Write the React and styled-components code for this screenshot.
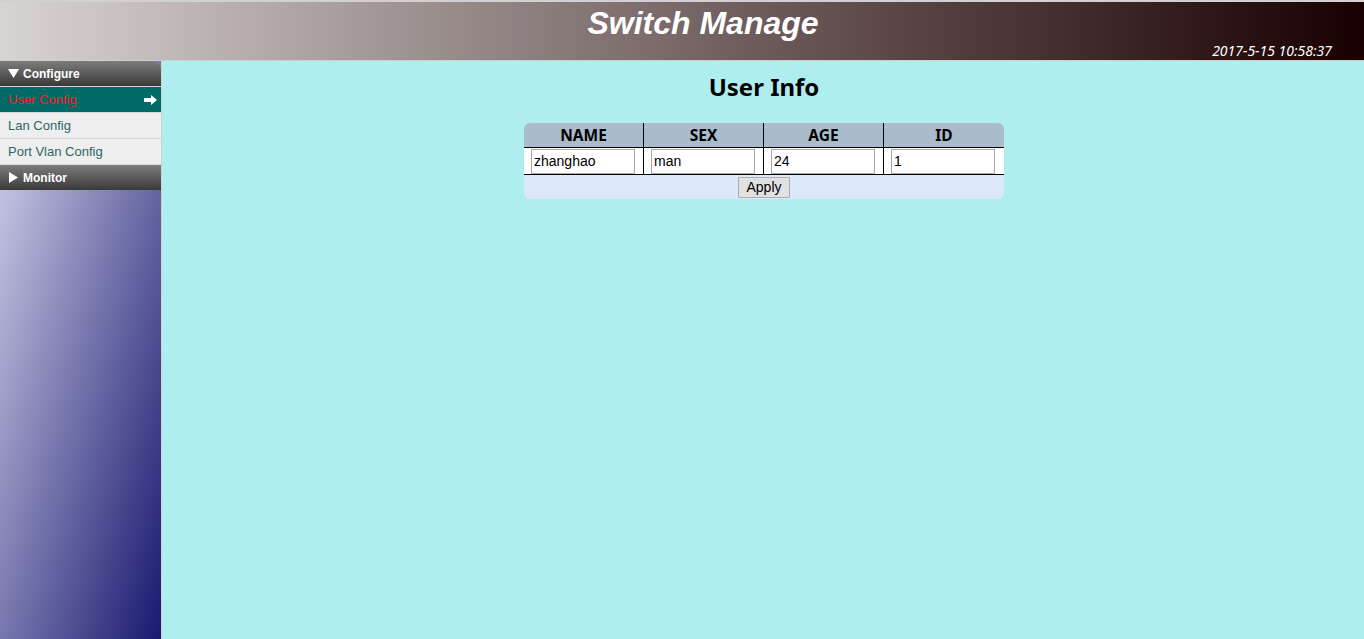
import { createGlobalStyle, styled } from 'styled-components'

const GlobalStyle = createGlobalStyle`
  html, body {
    margin: 0;
    padding: 0;
    height: 100%;
  }
  body {
    font-family: "Liberation Sans", Arial, sans-serif;
  }
  #root {
    height: 100%;
  }
`

const columns = [
  { name: 'NAME', value: 'zhanghao' },
  { name: 'SEX', value: 'man' },
  { name: 'AGE', value: '24' },
  { name: 'ID', value: '1' },
]

const menu = [
  { label: 'User Config', active: true },
  { label: 'Lan Config' },
  { label: 'Port Vlan Config' },
]

const Arrow = () => (
  <svg width='13' height='10' viewBox='0 0 13 10'>
    <path d='M0 3h7V0l6 5-6 5V7H0z' fill='#fff' />
  </svg>
)

// open / closed marker of a menu group
const Caret = ({ open }) => (
  <svg width='11' height='11' viewBox='0 0 11 11'>
    {open ? <path d='M0 1h11L5.5 10z' fill='#fff' /> : <path d='M1 0v11l9-5.5z' fill='#fff' />}
  </svg>
)

const App = () => {
  return (
    <Page>
      <GlobalStyle />
      <Header>
        <Title>Switch Manage</Title>
        <Clock>2017-5-15 10:58:37</Clock>
      </Header>
      <Body>
        <Sidebar>
          <GroupHead $rounded>
            <Caret open /> Configure
          </GroupHead>
          {menu.map((m) => (
            <Item key={m.label} $active={m.active}>
              {m.label}
              {m.active && <Arrow />}
            </Item>
          ))}
          <GroupHead>
            <Caret /> Monitor
          </GroupHead>
        </Sidebar>
        <Main>
          <Heading>User Info</Heading>
          <Table>
            <thead>
              <tr>
                {columns.map((c) => (
                  <Th key={c.name}>{c.name}</Th>
                ))}
              </tr>
            </thead>
            <tbody>
              <tr>
                {columns.map((c) => (
                  <Td key={c.name}>
                    <Field defaultValue={c.value} />
                  </Td>
                ))}
              </tr>
              <tr>
                <Foot colSpan={4}>
                  <Button>Apply</Button>
                </Foot>
              </tr>
            </tbody>
          </Table>
        </Main>
      </Body>
    </Page>
  )
}

const Page = styled.div`
  height: 100%;
  display: flex;
  flex-direction: column;
`

const Header = styled.header`
  height: 58px;
  border-top: 2px solid #d2d0d0;
  border-bottom: 1px solid #cfcccc;
  background: linear-gradient(to right, #d8d4d2, #6e5c5c 55%, #1a0000);
  display: flex;
  flex-direction: column;
  color: #fff;
`

const Title = styled.h1`
  margin: 0;
  padding-left: 42px;
  text-align: center;
  font: italic bold 32px/42px "Liberation Sans", Arial, sans-serif;
`

const Clock = styled.div`
  text-align: right;
  padding-right: 32px;
  font: italic 14px/14px "Noto Sans", "Open Sans", sans-serif;
`

const Body = styled.div`
  flex: 1;
  display: flex;
  min-height: 0;
`

const Sidebar = styled.nav`
  width: 161px;
  border-right: 1px solid #d0d0d0;
  background: linear-gradient(to bottom right, #d8d8ee, #191970);
  display: flex;
  flex-direction: column;
`

const GroupHead = styled.div`
  height: 25px;
  box-sizing: border-box;
  padding-left: 8px;
  display: flex;
  align-items: center;
  gap: 4px;
  color: #fff;
  font: bold 12px "Liberation Sans", Arial, sans-serif;
  background: linear-gradient(to bottom, #7c7c7c, #3a3a3a);
  border-top-right-radius: ${(p) => (p.$rounded ? '9px' : '0')};
  ${(p) => p.$rounded && 'border-bottom: 1px solid #d6d6d6; height: 26px;'}
`

const Item = styled.div`
  height: 26px;
  box-sizing: border-box;
  border-bottom: 1px solid #d8d8d8;
  padding: 0 4px 0 8px;
  display: flex;
  align-items: center;
  justify-content: space-between;
  font-size: 13px;
  color: ${(p) => (p.$active ? '#ff1a1a' : '#2c6666')};
  background: ${(p) => (p.$active ? '#006a66' : '#eeeeee')};
`

const Main = styled.main`
  flex: 1;
  padding-left: 2px;
  background: #afeeee;
  display: flex;
  flex-direction: column;
  align-items: center;
`

const Heading = styled.h2`
  margin: 10px 0 20px;
  font: bold 24px/32px "Noto Sans", "Open Sans", sans-serif;
  color: #000;
`

const Table = styled.table`
  width: 480px;
  border-collapse: separate;
  border-spacing: 0;
  border-radius: 6px;
  overflow: hidden;
  table-layout: fixed;
`

const Th = styled.th`
  height: 24px;
  padding: 0;
  background: #aabccb;
  border-bottom: 1px solid #000;
  border-right: 1px solid #000;
  font: bold 15.5px/24px "Noto Sans", "Open Sans", sans-serif;
  color: #000;
  &:last-child {
    border-right: none;
  }
`

const Td = styled.td`
  height: 26px;
  padding: 0 0 0 7px;
  background: #fff;
  border-bottom: 1px solid #000;
  border-right: 1px solid #000;
  &:last-child {
    border-right: none;
  }
`

const Field = styled.input`
  display: block;
  width: 104px;
  height: 25px;
  box-sizing: border-box;
  border: 1px solid #a9a9a9;
  padding: 0 2px;
  font: 14px "Liberation Sans", Arial, sans-serif;
  color: #000;
  outline: none;
`

const Foot = styled.td`
  height: 24px;
  padding: 0;
  background: #dde8fa;
  text-align: center;
`

const Button = styled.button`
  height: 21px;
  padding: 0 7px;
  border: 1px solid #adadad;
  background: #e1e1e1;
  font: 14px "Liberation Sans", Arial, sans-serif;
  color: #000;
`

export default App
